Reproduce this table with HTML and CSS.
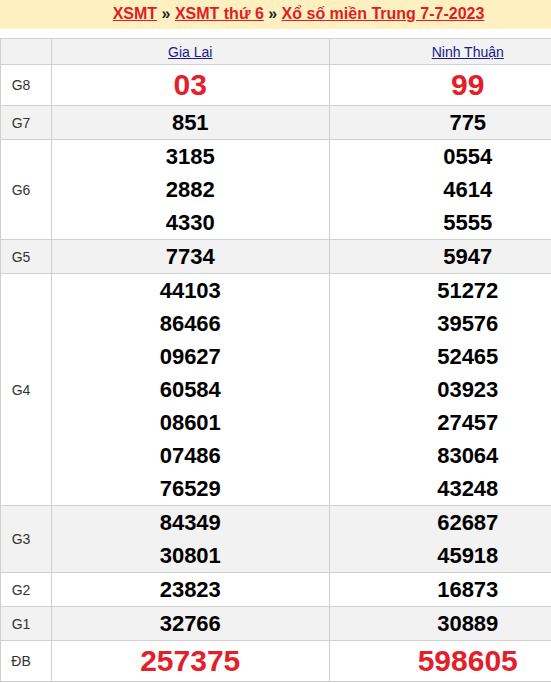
FILE: index.html
```html
<!DOCTYPE html>
<html lang="vi">
<head>
<meta charset="utf-8">
<title>XSMT 7-7-2023</title>
<link rel="stylesheet" href="styles.css">
</head>
<body>
<div class="page">
  <div class="title">
    <a href="#">XSMT</a> » <a href="#">XSMT thứ 6</a> » <a href="#">Xổ số miền Trung 7-7-2023</a>
  </div>
  <table class="kq">
    <tr class="head">
      <th class="lbl"></th>
      <th><a href="#">Gia Lai</a></th>
      <th><a href="#">Ninh Thuận</a></th>
    </tr>
    <tr class="big">
      <td class="lbl">G8</td>
      <td><div>03</div></td>
      <td><div>99</div></td>
    </tr>
    <tr class="alt">
      <td class="lbl">G7</td>
      <td><div>851</div></td>
      <td><div>775</div></td>
    </tr>
    <tr>
      <td class="lbl">G6</td>
      <td><div>3185</div><div>2882</div><div>4330</div></td>
      <td><div>0554</div><div>4614</div><div>5555</div></td>
    </tr>
    <tr class="alt">
      <td class="lbl">G5</td>
      <td><div>7734</div></td>
      <td><div>5947</div></td>
    </tr>
    <tr>
      <td class="lbl">G4</td>
      <td><div>44103</div><div>86466</div><div>09627</div><div>60584</div><div>08601</div><div>07486</div><div>76529</div></td>
      <td><div>51272</div><div>39576</div><div>52465</div><div>03923</div><div>27457</div><div>83064</div><div>43248</div></td>
    </tr>
    <tr class="alt">
      <td class="lbl">G3</td>
      <td><div>84349</div><div>30801</div></td>
      <td><div>62687</div><div>45918</div></td>
    </tr>
    <tr>
      <td class="lbl">G2</td>
      <td><div>23823</div></td>
      <td><div>16873</div></td>
    </tr>
    <tr class="alt">
      <td class="lbl">G1</td>
      <td><div>32766</div></td>
      <td><div>30889</div></td>
    </tr>
    <tr class="big">
      <td class="lbl">ĐB</td>
      <td><div>257375</div></td>
      <td><div>598605</div></td>
    </tr>
  </table>
</div>
</body>
</html>
```
FILE: styles.css
```css
html, body {
  margin: 0;
  padding: 0;
  overflow: hidden;
  background: #fff;
}
body {
  font-family: "Liberation Sans", Arial, sans-serif;
}
.page {
  width: 607px;
}
.title {
  background: #fff0c2;
  height: 29px;
  line-height: 27px;
  text-align: center;
  font-size: 16px;
  font-weight: bold;
  color: #222;
  margin-bottom: 9px;
  padding-right: 10px;
}
.title a {
  color: #e31b23;
  text-decoration: underline;
}
.kq {
  width: 607px;
  border-collapse: collapse;
  table-layout: fixed;
}
.kq th, .kq td {
  border: 1px solid #cfcfcf;
  padding: 0;
  text-align: center;
  vertical-align: middle;
}
.kq .lbl {
  width: 40px;
  padding-right: 10px;
  font-size: 14px;
  color: #333;
  font-weight: normal;
}
.kq .head th {
  background: #f2f2f2;
  height: 25px;
  font-size: 14px;
  font-weight: normal;
}
.kq .head a {
  color: #1a1a8c;
  text-decoration: underline;
}
.kq td div {
  font-size: 22px;
  line-height: 33px;
  font-weight: bold;
  color: #000;
}
.kq tr.alt td {
  background: #f2f2f2;
}
.kq tr.big td div {
  font-size: 30px;
  line-height: 40px;
  color: #e3202a;
}
```
